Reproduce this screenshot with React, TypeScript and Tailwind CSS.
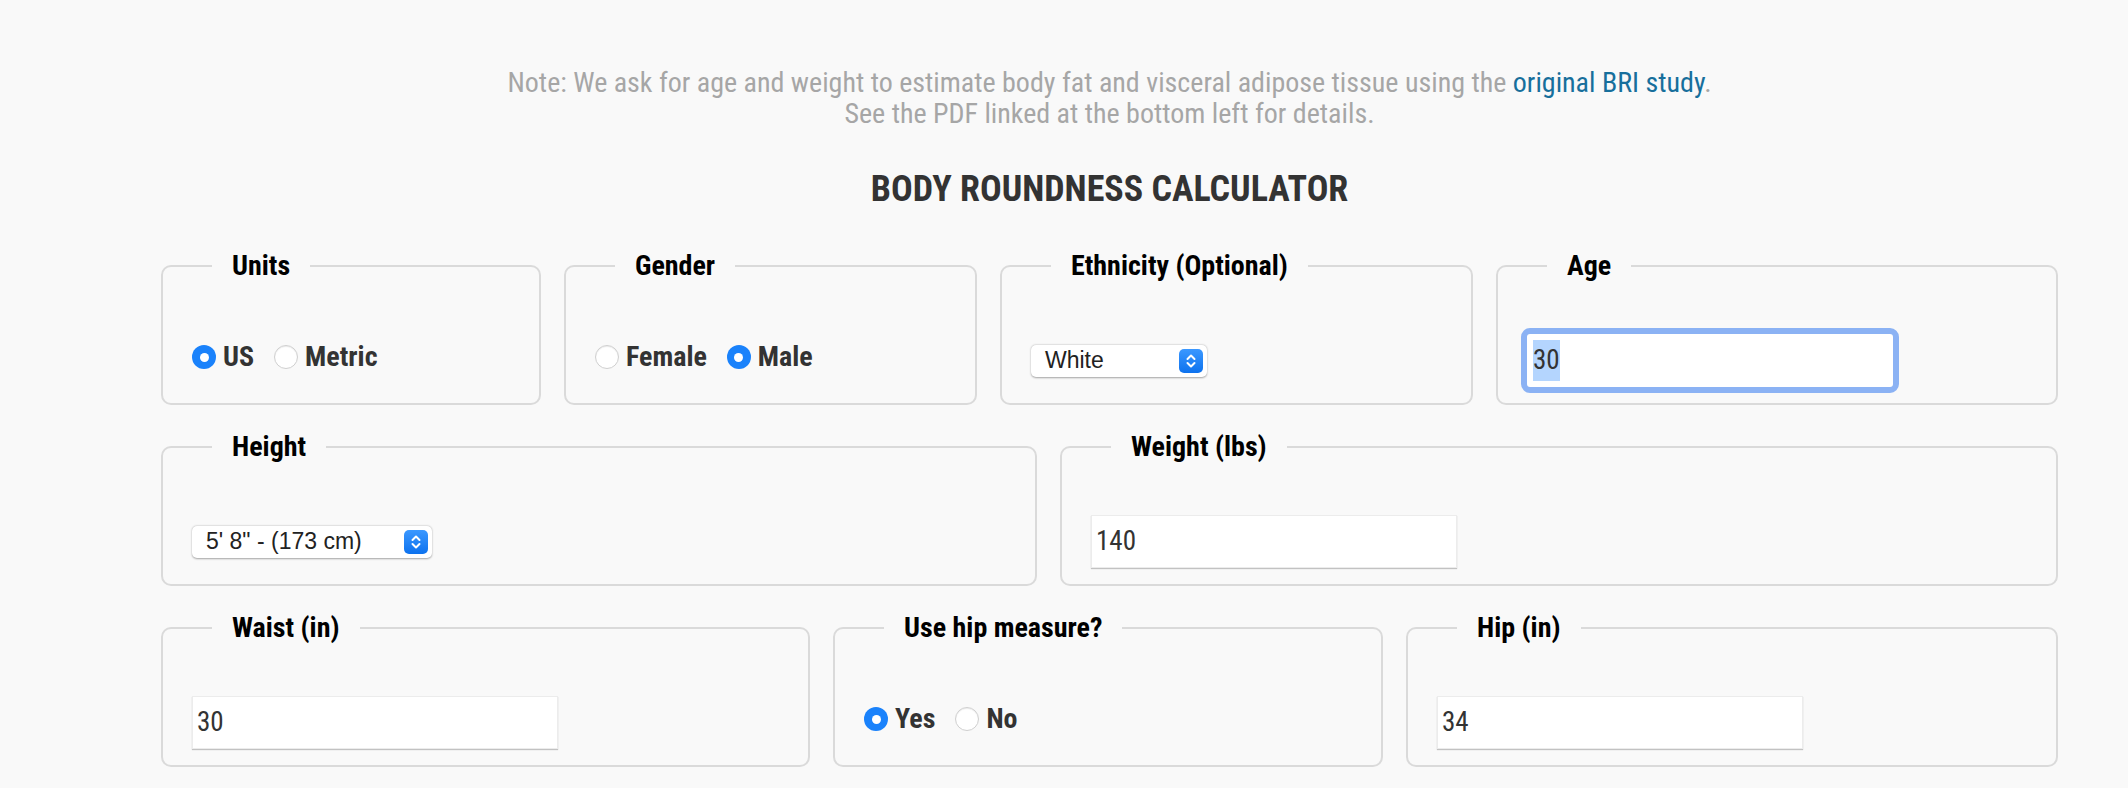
import React from "react";

function Radio({ checked }: { checked: boolean }) {
  return checked ? (
    <span className="flex h-[24px] w-[24px] shrink-0 items-center justify-center rounded-full bg-[#1a82fb]">
      <span className="h-[9px] w-[9px] rounded-full bg-white" />
    </span>
  ) : (
    <span className="h-[24px] w-[24px] shrink-0 rounded-full border border-[#cfcfcf] bg-white shadow-[inset_0_1px_1px_rgba(0,0,0,0.08)]" />
  );
}

function RadioGroup({ options }: { options: { label: string; checked: boolean }[] }) {
  return (
    <div className="mb-[7px] flex items-center gap-[20px]">
      {options.map((o) => (
        <label key={o.label} className="flex items-center gap-[7px] text-[28px] font-bold text-[#333]">
          <Radio checked={o.checked} />
          <span>{o.label}</span>
        </label>
      ))}
    </div>
  );
}

function SelectBtn() {
  return (
    <svg width="24" height="24" viewBox="0 0 24 24" className="shrink-0">
      <defs>
        <linearGradient id="sb" x1="0" y1="0" x2="0" y2="1">
          <stop offset="0" stopColor="#3b98ff" />
          <stop offset="1" stopColor="#0d72ee" />
        </linearGradient>
      </defs>
      <rect x="0" y="0" width="24" height="24" rx="5" fill="url(#sb)" />
      <path d="M8.5 10 L12 6.5 L15.5 10" stroke="#fff" strokeWidth="2" fill="none" strokeLinecap="round" strokeLinejoin="round" />
      <path d="M8.5 14 L12 17.5 L15.5 14" stroke="#fff" strokeWidth="2" fill="none" strokeLinecap="round" strokeLinejoin="round" />
    </svg>
  );
}

function FakeSelect({ value, width }: { value: string; width: string }) {
  return (
    <div
      className={`flex h-[32px] items-center justify-between rounded-[5px] bg-white pl-[14px] pr-[4px] font-['Liberation_Sans',Arial,sans-serif] text-[23px] text-[#222] shadow-[0_0.5px_2px_rgba(0,0,0,0.35)] font-stretch-normal ${width}`}
    >
      <span>{value}</span>
      <SelectBtn />
    </div>
  );
}

function TextInput({ value, focused }: { value: string; focused?: boolean }) {
  return focused ? (
    <div className="flex h-[53px] w-[366px] items-center rounded-[3px] bg-white pl-[6px] text-[27px] text-[#333] outline outline-[6px] outline-[#8bb2f4]">
      <span className="bg-[#b4d5fe]">{value}</span>
    </div>
  ) : (
    <div className="flex h-[53px] w-[366px] items-center border border-[#ececec] bg-white pl-[4px] text-[27px] text-[#333] shadow-[0_1px_1px_rgba(0,0,0,0.22)]">
      {value}
    </div>
  );
}

function Field({
  legend,
  className,
  children,
}: {
  legend: string;
  className: string;
  children: React.ReactNode;
}) {
  return (
    <fieldset className={`rounded-[10px] border-2 border-[#dadada] pb-[16px] ${className}`}>
      <legend className="ml-[49px] px-[20px] text-[28px] font-bold leading-[34px] text-black">{legend}</legend>
      <div className="mt-[51px] flex h-[53px] items-center pl-[29px]">{children}</div>
    </fieldset>
  );
}

export default function App() {
  return (
    <div className="min-h-screen bg-[#f9f9f9] font-['Roboto_Condensed',Roboto,sans-serif] font-stretch-condensed">
      <div className="ml-[161px] w-[1897px] pb-[20px]">
        <div className="pt-[67px] text-center text-[28px] leading-[31px] text-[#a6a6a6]">
          <p>
            Note: We ask for age and weight to estimate body fat and visceral adipose tissue using the{" "}
            <a className="text-[#176f9c]">original BRI study</a>.
          </p>
          <p>See the PDF linked at the bottom left for details.</p>
        </div>
        <h1 className="mt-[38px] text-center text-[36px] font-bold leading-[44px] text-[#333]">
          BODY ROUNDNESS CALCULATOR
        </h1>
        <div className="mt-[38px] flex flex-col gap-[25px]">
          <div className="flex gap-[23px]">
            <Field legend="Units" className="w-[380px]">
              <RadioGroup options={[{ label: "US", checked: true }, { label: "Metric", checked: false }]} />
            </Field>
            <Field legend="Gender" className="w-[413px]">
              <RadioGroup options={[{ label: "Female", checked: false }, { label: "Male", checked: true }]} />
            </Field>
            <Field legend="Ethnicity (Optional)" className="w-[473px]">
              <FakeSelect value="White" width="w-[176px]" />
            </Field>
            <Field legend="Age" className="flex-1">
              <TextInput value="30" focused />
            </Field>
          </div>
          <div className="flex gap-[23px]">
            <Field legend="Height" className="w-[876px]">
              <FakeSelect value={'5\' 8" - (173 cm)'} width="w-[240px]" />
            </Field>
            <Field legend="Weight (lbs)" className="flex-1">
              <TextInput value="140" />
            </Field>
          </div>
          <div className="flex gap-[23px]">
            <Field legend="Waist (in)" className="w-[649px]">
              <TextInput value="30" />
            </Field>
            <Field legend="Use hip measure?" className="w-[550px]">
              <RadioGroup options={[{ label: "Yes", checked: true }, { label: "No", checked: false }]} />
            </Field>
            <Field legend="Hip (in)" className="flex-1">
              <TextInput value="34" />
            </Field>
          </div>
        </div>
      </div>
    </div>
  );
}
